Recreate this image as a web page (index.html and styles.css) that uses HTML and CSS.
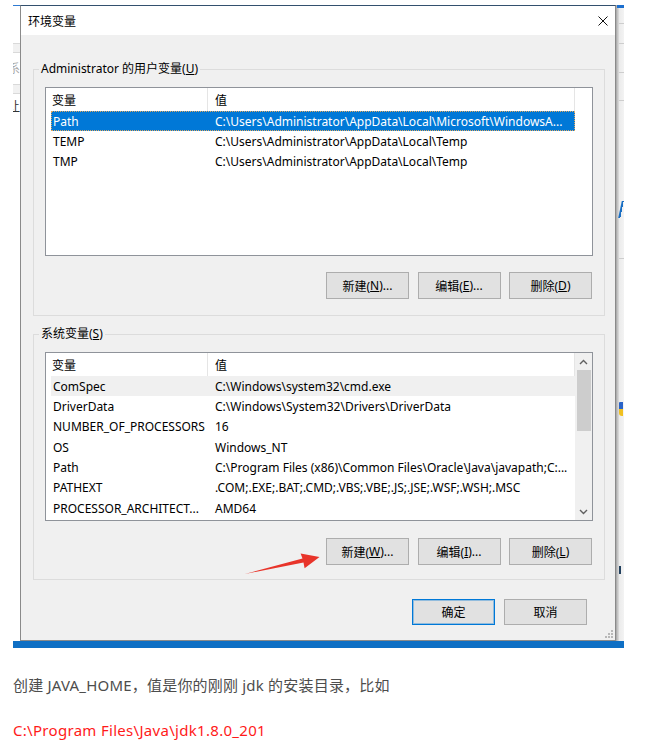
FILE: index.html
```html
<!DOCTYPE html>
<html lang="zh-CN">
<head>
<meta charset="utf-8">
<title>环境变量</title>
<link rel="stylesheet" href="styles.css">
</head>
<body>
<div class="page">
  <div class="shot">
    <div class="bg-left">
      <div class="bl-blue"></div>
      <div class="bl-gap g37"></div>
      <div class="bl-line"></div>
      <div class="bl-band"></div>
      <div class="bl-line"></div>
      <div class="bl-gap g9"></div>
      <div class="bl-glyph light"><span>系</span></div>
      <div class="bl-gap g9"></div>
      <div class="bl-line"></div>
      <div class="bl-band"></div>
      <div class="bl-line"></div>
      <div class="bl-gap g6"></div>
      <div class="bl-glyph dark"><span>让</span></div>
    </div>

    <div class="dialog">
      <div class="titlebar">
        <span class="title">环境变量</span>
        <svg class="close" width="10" height="10" viewBox="0 0 10 10"><path d="M0.5 0.5L9.5 9.5M9.5 0.5L0.5 9.5" stroke="#111" stroke-width="1" fill="none"/></svg>
      </div>
      <div class="body">
        <fieldset class="group g-user">
          <legend>Administrator 的用户变量(<u>U</u>)</legend>
          <div class="list">
            <div class="row head"><span class="c1">变量</span><span class="c2">值</span></div>
            <div class="row sel"><span class="c1">Path</span><span class="c2">C:\Users\Administrator\AppData\Local\Microsoft\WindowsA...</span></div>
            <div class="row"><span class="c1">TEMP</span><span class="c2">C:\Users\Administrator\AppData\Local\Temp</span></div>
            <div class="row"><span class="c1">TMP</span><span class="c2">C:\Users\Administrator\AppData\Local\Temp</span></div>
          </div>
          <div class="btns">
            <div class="btn">新建(<u>N</u>)...</div>
            <div class="btn">编辑(<u>E</u>)...</div>
            <div class="btn">删除(<u>D</u>)</div>
          </div>
        </fieldset>

        <fieldset class="group g-sys">
          <legend>系统变量(<u>S</u>)</legend>
          <div class="list sys">
            <div class="list-main">
              <div class="row head"><span class="c1">变量</span><span class="c2">值</span></div>
              <div class="row hl"><span class="c1">ComSpec</span><span class="c2">C:\Windows\system32\cmd.exe</span></div>
              <div class="row"><span class="c1">DriverData</span><span class="c2">C:\Windows\System32\Drivers\DriverData</span></div>
              <div class="row"><span class="c1">NUMBER_OF_PROCESSORS</span><span class="c2">16</span></div>
              <div class="row"><span class="c1">OS</span><span class="c2">Windows_NT</span></div>
              <div class="row"><span class="c1">Path</span><span class="c2">C:\Program Files (x86)\Common Files\Oracle\Java\javapath;C:...</span></div>
              <div class="row"><span class="c1">PATHEXT</span><span class="c2">.COM;.EXE;.BAT;.CMD;.VBS;.VBE;.JS;.JSE;.WSF;.WSH;.MSC</span></div>
              <div class="row"><span class="c1">PROCESSOR_ARCHITECT...</span><span class="c2">AMD64</span></div>
            </div>
            <div class="scroll">
              <div class="sb-btn"><svg width="9" height="6" viewBox="0 0 9 6"><path d="M1 5L4.5 1.5L8 5" stroke="#606060" stroke-width="1.4" fill="none"/></svg></div>
              <div class="thumb"></div>
              <div class="sb-fill"></div>
              <div class="sb-btn"><svg width="9" height="6" viewBox="0 0 9 6"><path d="M1 1L4.5 4.5L8 1" stroke="#606060" stroke-width="1.4" fill="none"/></svg></div>
            </div>
          </div>
          <div class="btns">
            <div class="btn">新建(<u>W</u>)...</div>
            <div class="btn">编辑(<u>I</u>)...</div>
            <div class="btn">删除(<u>L</u>)</div>
          </div>
        </fieldset>

        <div class="footer">
          <div class="btn ok">确定</div>
          <div class="btn">取消</div>
        </div>
      </div>
      <svg class="grip" width="9" height="9" viewBox="0 0 9 9" fill="#b8b8b8">
        <rect x="7" y="1" width="2" height="2"/>
        <rect x="4" y="4" width="2" height="2"/><rect x="7" y="4" width="2" height="2"/>
        <rect x="1" y="7" width="2" height="2"/><rect x="4" y="7" width="2" height="2"/><rect x="7" y="7" width="2" height="2"/>
      </svg>
    </div>

    <div class="bg-right">
      <div class="br-blue"></div>
      <div class="br-gap h15"></div>
      <div class="br-line"></div>
      <div class="br-gap h19"></div>
      <div class="br-line"></div>
      <div class="br-gap h28"></div>
      <div class="br-line"></div>
      <div class="br-gap h27"></div>
      <div class="br-line"></div>
      <div class="br-gap h100"></div>
      <div class="br-v"></div>
      <div class="br-gap h40"></div>
      <div class="br-line"></div>
      <div class="br-gap h143"></div>
      <div class="br-shield"></div>
      <div class="br-gap h150"></div>
      <div class="br-mark"></div>
    </div>

    <div class="taskbar"></div>

    <svg class="arrow" viewBox="13 5 611 643" width="611" height="643">
      <polygon points="245,574 302.5,558.6 300.6,553.4 319.5,557 304.6,568.2 303.5,562.6" fill="#e8342a"/>
    </svg>
  </div>

  <p class="note">创建 JAVA_HOME，值是你的刚刚 jdk 的安装目录，比如</p>
  <p class="path">C:\Program Files\Java\jdk1.8.0_201</p>
</div>
</body>
</html>
```

FILE: styles.css
```css
* { box-sizing: border-box; }

body {
  margin: 0;
  background: #fff;
  font-family: "Noto Sans", "Noto Sans CJK SC", sans-serif;
}

.page { padding: 5px 0 0 13px; }

.shot {
  position: relative;
  display: grid;
  grid-template-columns: 7px 596px 8px;
  grid-template-rows: 636px 7px;
  width: 611px;
}

/* background fragments of the screenshot */
.bg-left {
  grid-column: 1;
  grid-row: 1;
  background: #fff;
  display: flex;
  flex-direction: column;
  overflow: hidden;
}
.bl-blue { height: 1px; background: #2f7bd2; flex: none; }
.bl-gap { flex: none; }
.g37 { height: 37px; }
.g9 { height: 9px; }
.g6 { height: 6px; }
.bl-line { height: 1px; background: #d9d9d9; flex: none; }
.bl-band { height: 8px; background: #f1f1f1; flex: none; }
.bl-glyph {
  flex: none;
  height: 13px;
  font-size: 12px;
  line-height: 13px;
  white-space: nowrap;
}
.bl-glyph span { display: inline-block; margin-left: -5px; }
.bl-glyph.light { color: #a8a8a8; }
.bl-glyph.dark { color: #333; }

.bg-right {
  grid-column: 3;
  grid-row: 1;
  background: linear-gradient(to right, #a4a4a4 0, #cfcfcf 2px, #dddddd 3px, #ebebeb 3px, #f3f3f3 8px);
  display: flex;
  flex-direction: column;
  padding-left: 3px;
  overflow: hidden;
}
.br-blue { height: 3px; background: #1c6fcf; flex: none; margin-left: -2px; }
.br-gap { flex: none; }
.h15 { height: 15px; }
.h19 { height: 19px; }
.h28 { height: 28px; }
.h27 { height: 27px; }
.h100 { height: 100px; }
.h40 { height: 40px; }
.h143 { height: 143px; }
.h150 { height: 150px; }
.br-line { height: 1px; background: #cdcdcd; flex: none; }
.br-v {
  flex: none;
  height: 17px;
  width: 3px;
  margin-left: 1px;
  background: linear-gradient(to right, #1a6fc4 0, #1a6fc4 2px, transparent 2px);
  transform: skewX(-12deg);
}
.br-shield {
  flex: none;
  height: 14px;
  width: 4px;
  background: linear-gradient(to bottom, #2a63c8 0, #2a63c8 50%, #f0c020 50%);
  border-radius: 1px 0 0 3px;
}
.br-mark {
  flex: none;
  height: 8px;
  width: 2px;
  background: #22415f;
}

.taskbar {
  grid-column: 1 / 4;
  grid-row: 2;
  background: #0f6fc4;
}

/* dialog */
.dialog {
  grid-column: 2;
  grid-row: 1;
  position: relative;
  display: flex;
  flex-direction: column;
  background: #f0f0f0;
  border: 1px solid #8a8a8a;
  border-top-color: #33506e;
  font-size: 12px;
  color: #000;
}

.titlebar {
  height: 29px;
  flex: none;
  background: #fff;
  display: flex;
  align-items: center;
  justify-content: space-between;
  padding: 0 7px;
}
.title { font-size: 12px; }
.close { display: block; }

.body {
  flex: 1;
  display: flex;
  flex-direction: column;
  padding: 26px 10px 0 12px;
}

.group {
  margin: 0;
  min-width: 0;
  padding: 10px 11px 16px;
  border: 1px solid #dcdcdc;
}
.group legend {
  font-size: 12px;
  line-height: 16px;
  padding: 0 2px;
  margin-left: -6px;
}
.g-sys {
  margin-top: 10px;
  padding-bottom: 14px;
}
.g-sys .btns { margin-top: 17px; }

.list {
  height: 169px;
  border: 1px solid #8f939a;
  background: #fff;
  overflow: hidden;
}
.list.sys {
  display: grid;
  grid-template-columns: 1fr 17px;
}
.list-main { overflow: hidden; min-width: 0; }

.row {
  display: flex;
  align-items: center;
  width: 524px;
  height: 20.33px;
  margin-left: 5px;
  font-size: 12px;
  white-space: nowrap;
}
.row.head { height: 23px; align-items: stretch; }
.c1 { width: 157px; flex: none; padding-left: 2px; overflow: hidden; }
.c2 { flex: 1; padding-left: 7px; overflow: hidden; }
.head .c1,
.head .c2 {
  display: flex;
  align-items: center;
  border-right: 1px solid #e5e5e5;
}
.head .c1 { padding-left: 1px; }
.row.sel {
  background: #0078d7;
  color: #fff;
  outline: 1px dotted #e0a860;
  outline-offset: -1px;
}
.row.hl { background: #f0f0f0; }

.scroll {
  background: #f0f0f0;
  display: flex;
  flex-direction: column;
}
.sb-btn {
  height: 17px;
  flex: none;
  display: flex;
  align-items: center;
  justify-content: center;
}
.sb-btn svg { display: block; }
.thumb { height: 61px; flex: none; background: #cdcdcd; margin: 0 1px 0 2px; }
.sb-fill { flex: 1; }

.btns {
  display: flex;
  justify-content: flex-end;
  gap: 8.5px;
  margin-top: 16px;
  padding-right: 1px;
}
.btn {
  width: 83px;
  height: 27px;
  flex: none;
  display: flex;
  align-items: center;
  justify-content: center;
  background: #e1e1e1;
  border: 1px solid #adadad;
  font-size: 12px;
  white-space: nowrap;
}

.footer {
  display: flex;
  justify-content: flex-end;
  gap: 9px;
  margin-top: 19px;
  padding-right: 18px;
}
.footer .btn { height: 26px; }
.btn.ok {
  border-color: #0078d7;
  box-shadow: inset 0 0 0 1px rgba(0, 120, 215, 0.35);
}

.grip {
  position: absolute;
  right: 2px;
  bottom: 2px;
}

.arrow {
  position: absolute;
  left: 0;
  top: 0;
  pointer-events: none;
}

/* article text below the screenshot */
.note {
  margin: 25px 0 0;
  font-size: 15px;
  line-height: 24px;
  color: #4d4d4d;
  letter-spacing: 0.2px;
}
.path {
  margin: 21px 0 0;
  font-size: 15px;
  line-height: 24px;
  color: #ff1a1a;
  letter-spacing: 0.3px;
}
```
